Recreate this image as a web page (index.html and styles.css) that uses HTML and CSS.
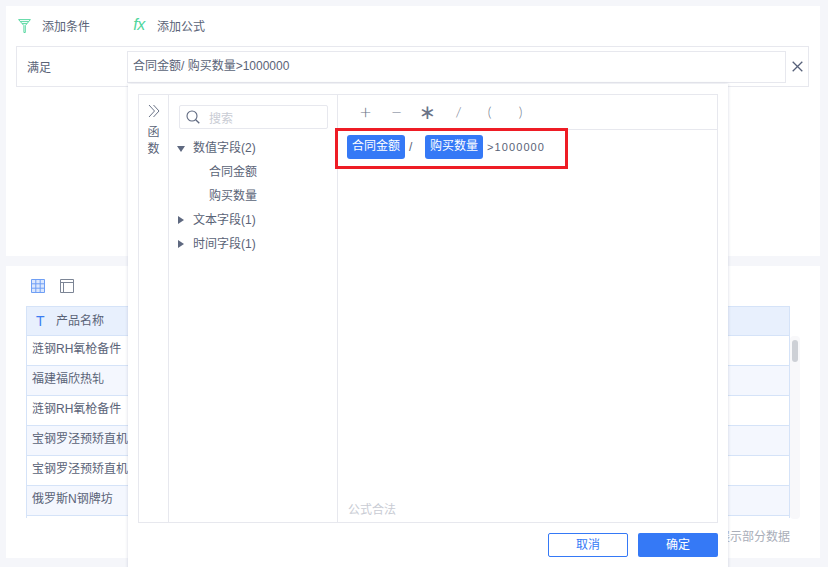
FILE: index.html
```html
<!DOCTYPE html>
<html lang="zh">
<head>
<meta charset="utf-8">
<title>添加公式</title>
<link rel="stylesheet" href="styles.css">
</head>
<body>
<section class="panel top-panel">
  <div class="actions">
    <button class="action action-filter">
      <svg class="icon-filter" viewBox="0 0 13 14" width="13" height="14"><path d="M.6.6h11.800L7.300 6.600v6.900H5.900V6.600L.6.600zM2.300 2.600h8.400M4 4.600h5" fill="none" stroke="#5cd9a4" stroke-width="1"/></svg>
      <span>添加条件</span>
    </button>
    <button class="action action-fx">
      <span class="fx">fx</span>
      <span>添加公式</span>
    </button>
  </div>
  <div class="condition">
    <span class="cond-label">满足</span>
    <div class="cond-input">合同金额/ 购买数量&gt;1000000</div>
    <svg class="cond-close" viewBox="0 0 11 11" width="11" height="11"><path d="M.7.7l9.600 9.600M10.300.7L.7 10.300" stroke="#566079" stroke-width="1.300" fill="none"/></svg>
  </div>
</section>

<section class="panel bottom-panel">
  <div class="view-tabs">
    <svg viewBox="0 0 14 14" width="14" height="14"><path d="M.5.5h13v13H.5zM.5 4.800h13M.5 9.200h13M4.800.5v13M9.200.5v13" fill="#dbe7fd" stroke="#6f9ff5"/></svg>
    <svg viewBox="0 0 14 14" width="14" height="14"><path d="M.5.5h13v13H.5zM.5 3.500h13M3.500 3.500v10" fill="none" stroke="#7c8595" stroke-width="1"/></svg>
  </div>
  <div class="table-wrap">
    <div class="table">
      <div class="row head"><span class="type-t">T</span><span>产品名称</span></div>
      <div class="row">涟钢RH氧枪备件</div>
      <div class="row alt">福建福欣热轧</div>
      <div class="row">涟钢RH氧枪备件</div>
      <div class="row alt">宝钢罗泾预矫直机</div>
      <div class="row">宝钢罗泾预矫直机</div>
      <div class="row alt">俄罗斯N钢牌坊</div>
      <div class="row"></div>
    </div>
    <div class="scrolltrack"><div class="scrollthumb"></div></div>
  </div>
  <div class="note">仅展示部分数据</div>
</section>

<div class="popup">
  <div class="editor">
    <aside class="fn-rail">
      <svg viewBox="0 0 12 14" width="12" height="14"><path d="M1 1l5.500 6L1 13M5.500 1L11 7l-5.500 6" fill="none" stroke="#6b7488" stroke-width="1"/></svg>
      <span class="fn-label">函<br>数</span>
    </aside>
    <aside class="fields">
      <div class="search">
        <svg viewBox="0 0 14 14" width="14" height="14"><circle cx="6" cy="6" r="5" fill="none" stroke="#5f6980" stroke-width="1.100"/><path d="M9.700 9.700L13.300 13.300" stroke="#5f6980" stroke-width="1.300"/></svg>
        <span>搜索</span>
      </div>
      <ul class="tree">
        <li><i class="tri tri-down"></i>数值字段(2)</li>
        <li class="leaf">合同金额</li>
        <li class="leaf">购买数量</li>
        <li><i class="tri tri-right"></i>文本字段(1)</li>
        <li><i class="tri tri-right"></i>时间字段(1)</li>
      </ul>
    </aside>
    <div class="formula">
      <div class="ops">
        <span class="op">+</span><span class="op">−</span><span class="op">∗</span><span class="op op-small">/</span><span class="op op-small">(</span><span class="op op-small">)</span>
      </div>
      <div class="expr">
        <span class="tag">合同金额</span>
        <span class="slash">/</span>
        <span class="tag">购买数量</span>
        <span class="tail">&gt;1000000</span>
      </div>
      <div class="valid">公式合法</div>
      <div class="highlight"></div>
    </div>
  </div>
  <div class="footer">
    <button class="btn btn-ghost">取消</button>
    <button class="btn btn-primary">确定</button>
  </div>
</div>
</body>
</html>
```
FILE: styles.css
```css
* { box-sizing: border-box; }
html, body { margin: 0; height: 100%; }
body {
  position: relative;
  width: 828px;
  height: 567px;
  overflow: hidden;
  padding: 6px 8px 0 6px;
  background: #f5f6fa;
  font-family: "Liberation Sans", "Noto Sans CJK SC", sans-serif;
  font-size: 12px;
  color: #5a6377;
}
button { font: inherit; color: inherit; background: none; border: 0; padding: 0; }
ul { list-style: none; margin: 0; padding: 0; }

.panel { background: #fff; width: 814px; }
.top-panel { height: 250px; padding: 0 11px 0 10px; margin-bottom: 10px; }
.bottom-panel { height: 292px; padding: 0 0 0 20px; }

.actions { height: 40px; display: flex; align-items: center; padding: 0 0 2px 2px; }
.action { display: flex; align-items: center; }
.action-filter { width: 114px; gap: 11px; }
.action-fx { gap: 11px; }
.icon-filter { margin-top: 2px; }
.fx {
  width: 14px;
  font-family: "Liberation Sans", sans-serif;
  font-style: italic;
  font-size: 16px;
  line-height: 16px;
  letter-spacing: -.5px;
  color: #4fd69c;
}

.condition {
  height: 41px;
  border: 1px solid #e7e8ee;
  display: flex;
  align-items: center;
  padding-left: 10px;
}
.cond-label { width: 100px; }
.cond-input {
  width: 659px;
  height: 32px;
  border: 1px solid #e7e8ee;
  padding-left: 5px;
  line-height: 29px;
}
.cond-close { margin-left: 6px; }

.view-tabs { height: 40px; display: flex; align-items: center; gap: 15px; padding: 0 0 0 5px; }
.table-wrap { display: flex; height: 212px; }
.table {
  width: 764px;
  height: 212px;
  overflow: hidden;
  border-left: 1px solid #d5e3f8;
  border-right: 1px solid #d5e3f8;
  border-top: 1px solid #d5e3f8;
}
.row {
  height: 30px;
  border-bottom: 1px solid #d5e3f8;
  padding-left: 5px;
  line-height: 27px;
  white-space: nowrap;
}
.row.head {
  height: 29px;
  background: #e8f0fd;
  display: flex;
  align-items: center;
  padding-left: 9px;
  gap: 11px;
}
.row.alt { background: #f4f7fe; }
.type-t { color: #3c7df2; font-size: 14px; width: 9px; }
.scrolltrack {
  width: 10px;
  height: 183px;
  margin-top: 30px;
  background: #f8f8fa;
  border-radius: 4px;
  padding: 4px 2px;
}
.scrollthumb { height: 22px; background: #cdd0d6; border-radius: 3px; }
.note { text-align: right; width: 764px; padding-top: 11px; color: #a9aeb9; line-height: 17px; }

.popup {
  position: absolute;
  left: 128px;
  top: 84px;
  width: 600px;
  height: 500px;
  padding: 10px;
  background: #fff;
  box-shadow: 0 0 3px rgba(120, 130, 160, .3);
}
.editor {
  width: 580px;
  height: 429px;
  border: 1px solid #e7e8ee;
  display: flex;
}
.fn-rail {
  width: 30px;
  border-right: 1px solid #e7e8ee;
  display: flex;
  flex-direction: column;
  align-items: center;
  padding-top: 9px;
}
.fn-label { margin-top: 6px; line-height: 17px; }
.fields { width: 169px; border-right: 1px solid #e7e8ee; padding: 10px 0 0 0; }
.search {
  width: 149px;
  height: 24px;
  margin-left: 10px;
  border: 1px solid #e7e8ee;
  border-radius: 2px;
  display: flex;
  align-items: center;
  padding-left: 6px;
  gap: 9px;
  color: #c9ccd4;
}
.tree { margin-top: 8px; }
.tree li { height: 24px; line-height: 23px; padding-left: 24px; position: relative; }
.tree li.leaf { padding-left: 40px; }
.tri { position: absolute; width: 0; height: 0; border-style: solid; border-color: transparent; }
.tri-down { left: 8px; top: 9px; border-width: 6px 4.500px 0; border-top-color: #5f6980; }
.tri-right { left: 9px; top: 7px; border-width: 4.500px 0 4.500px 6px; border-left-color: #5f6980; }

.formula { position: relative; flex: 1; display: flex; flex-direction: column; }
.ops {
  height: 35px;
  border-bottom: 1px solid #e7e8ee;
  display: flex;
  padding-left: 12px;
  flex: none;
}
.op {
  width: 31px;
  text-align: center;
  font-family: Lato, "Liberation Sans", sans-serif;
  font-weight: 300;
  font-size: 20px;
  line-height: 33px;
  color: #6b7488;
}
.op-small { font-size: 14px; }
.expr { display: flex; align-items: flex-start; padding: 5px 0 0 9px; flex: 1; }
.tag {
  width: 58px;
  height: 24px;
  background: #3579f6;
  color: #fff;
  border-radius: 3px;
  text-align: center;
  line-height: 23px;
}
.slash { width: 20px; padding-left: 4px; line-height: 24px; }
.tail { margin-left: 4px; line-height: 25px; font-size: 11px; letter-spacing: 1.100px; }
.valid { flex: none; height: 26px; padding-left: 10px; color: #c9ccd4; line-height: 28px; }
.highlight {
  position: absolute;
  left: -3px;
  top: 33px;
  width: 233px;
  height: 41px;
  border: 3px solid #ee1c25;
  pointer-events: none;
}

.footer { display: flex; justify-content: flex-end; gap: 10px; margin-top: 10px; }
.btn { width: 80px; height: 24px; border-radius: 2px; line-height: 22px; }
.btn-ghost { border: 1px solid #3579f6; color: #3579f6; }
.btn-primary { background: #3579f6; color: #fff; }
```
